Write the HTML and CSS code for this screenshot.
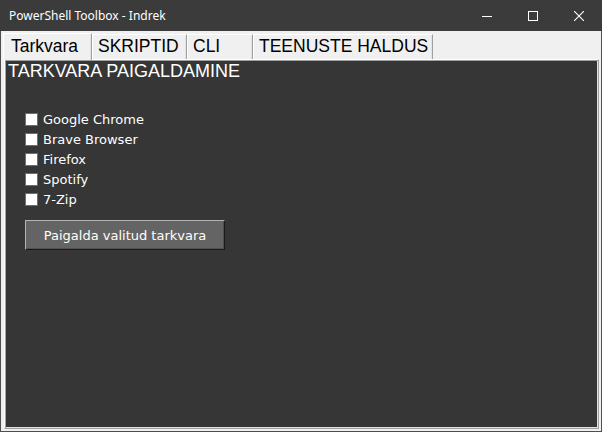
FILE: index.html
```html
<!DOCTYPE html>
<html lang="et">
<head>
<meta charset="utf-8">
<title>PowerShell Toolbox - Indrek</title>
<link rel="stylesheet" href="styles.css">
</head>
<body>
<div class="window">
  <div class="titlebar">
    <span class="title">PowerShell Toolbox - Indrek</span>
    <div class="controls">
      <span class="ctl"><svg width="10" height="10" viewBox="0 0 10 10"><path d="M0 5.5h10" stroke="#fff" stroke-width="1"/></svg></span>
      <span class="ctl"><svg width="10" height="10" viewBox="0 0 10 10"><rect x="0.5" y="0.5" width="9" height="9" fill="none" stroke="#fff" stroke-width="1"/></svg></span>
      <span class="ctl"><svg width="10" height="10" viewBox="0 0 10 10"><path d="M0 0L10 10M10 0L0 10" stroke="#fff" stroke-width="1.1"/></svg></span>
    </div>
  </div>
  <div class="client">
    <div class="tabs">
      <div class="tab tab-active tab-w1">Tarkvara</div>
      <div class="tab tab-w2">SKRIPTID</div>
      <div class="tab tab-w3">CLI</div>
      <div class="tab tab-w4">TEENUSTE HALDUS</div>
    </div>
    <div class="panel">
      <div class="heading">TARKVARA PAIGALDAMINE</div>
      <ul class="list">
        <li class="item"><span class="box"></span>Google Chrome</li>
        <li class="item"><span class="box"></span>Brave Browser</li>
        <li class="item"><span class="box"></span>Firefox</li>
        <li class="item"><span class="box"></span>Spotify</li>
        <li class="item"><span class="box"></span>7-Zip</li>
      </ul>
      <button class="btn">Paigalda valitud tarkvara</button>
    </div>
  </div>
</div>
</body>
</html>
```
FILE: styles.css
```css
* { box-sizing: border-box; }
html, body { margin: 0; padding: 0; }
body { width: 602px; height: 432px; background: #3b3b3b; overflow: hidden; }

.window {
  width: 602px; height: 432px;
  border: 1px solid #4e4e4e;
  border-top: 0;
  display: flex; flex-direction: column;
  background: #f0f0f0;
}

.titlebar {
  height: 31px; flex: none;
  background: #3b3b3b;
  display: flex; align-items: center; justify-content: space-between;
  margin: 0 -1px;
  padding-left: 9px;
}
.title {
  font-family: "Noto Sans", sans-serif;
  font-size: 12px; color: #fff;
  margin-top: -1px;
}
.controls { display: flex; height: 100%; }
.ctl { width: 46px; display: flex; align-items: center; justify-content: center; }

.client {
  flex: 1;
  display: flex; flex-direction: column;
  padding: 1px 2px 2px 2px;
}

.tabs {
  height: 27px; flex: none;
  display: flex; align-items: flex-end;
}
.tab {
  height: 25px;
  background: #f0f0f0;
  border-top: 1px solid #fff;
  border-left: 1px solid #fff;
  border-right: 1px solid #a0a0a0;
  box-shadow: inset -1px 0 0 #e3e3e3;
  font-family: "Liberation Sans", Arial, sans-serif;
  font-size: 17.5px; color: #000;
  line-height: 23px;
  padding-left: 5px;
  white-space: nowrap;
  overflow: hidden;
}
.tab-active {
  height: 27px;
  padding-left: 7px;
  line-height: 24px;
  position: relative; z-index: 1;
  margin-bottom: -1px;
}
.tab-w1 { width: 89px; }
.tab-w2 { width: 95px; }
.tab-w3 { width: 66px; }
.tab-w4 { width: 180px; }

.panel {
  flex: 1;
  margin-left: 1px;
  background: #363636;
  border-top: 1px solid #fff;
  border-left: 1px solid #fff;
  border-right: 1px solid #a0a0a0;
  border-bottom: 1px solid #a0a0a0;
  box-shadow: inset 1px 1px 0 #a0a0a0, inset -1px -1px 0 #e3e3e3;
  padding: 1px 0 0 3px;
}

.heading {
  font-family: "Liberation Sans", Arial, sans-serif;
  font-size: 18px; color: #fff;
  line-height: 21px;
}

.list { list-style: none; margin: 27px 0 0 17px; padding: 0; }
.item {
  height: 20px;
  display: flex; align-items: center;
  font-family: "DejaVu Sans", Verdana, sans-serif;
  font-size: 13px; color: #fff;
}
.box {
  width: 13px; height: 13px;
  background: #fff;
  border: 1px solid #6e6e6e;
  margin-right: 5px;
}

.btn {
  margin: 11px 0 0 17px;
  width: 200px; height: 30px;
  background: #646464;
  color: #fff;
  font-family: "DejaVu Sans", Verdana, sans-serif;
  font-size: 13px;
  border-top: 1px solid #b4b4b4;
  border-left: 1px solid #b4b4b4;
  border-right: 1px solid #1a1a1a;
  border-bottom: 1px solid #1a1a1a;
  box-shadow: inset -1px -1px 0 #505050;
  padding: 0;
}
```
